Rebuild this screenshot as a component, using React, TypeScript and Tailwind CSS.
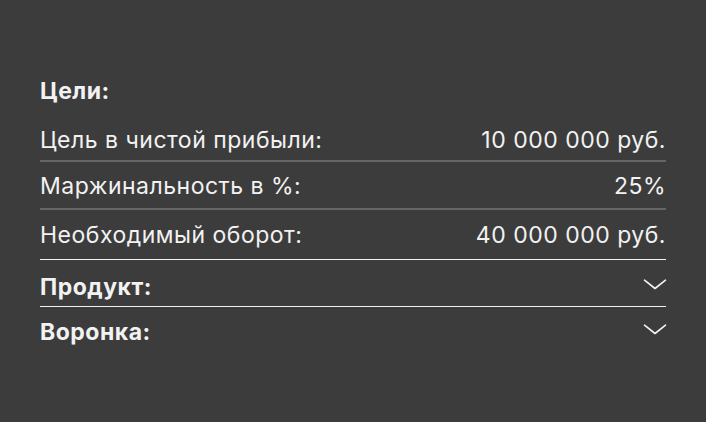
import React from "react";

const Chevron = () => (
  <svg width="24" height="11" viewBox="0 0 24 11" fill="none" className="block mt-[6px] mr-[-1px]">
    <path d="M1.5 1.2 L12 9.5 L22.5 1.2" stroke="#f2f2f2" strokeWidth="1.6" strokeLinecap="round" strokeLinejoin="round" />
  </svg>
);

export default function App() {
  return (
    <div
      className="w-[706px] h-[422px] bg-[#3c3c3c] text-[#f2f2f2] px-[40px] pt-[77px] text-[23px] leading-[28px] tracking-[0.5px]"
      style={{ fontFamily: "Inter, 'Noto Sans', sans-serif" }}
    >
      <div className="font-bold">Цели:</div>
      <div className="flex justify-between pt-[21px] pb-[6px] border-b-2 border-[#666666]">
        <span>Цель в чистой прибыли:</span>
        <span>10 000 000 руб.</span>
      </div>
      <div className="flex justify-between pt-[10px] pb-[8px] border-b-2 border-[#666666]">
        <span>Маржинальность в %:</span>
        <span>25%</span>
      </div>
      <div className="flex justify-between pt-[11px] pb-[10px] border-b border-[#f2f2f2]">
        <span>Необходимый оборот:</span>
        <span>40 000 000 руб.</span>
      </div>
      <div className="flex justify-between items-start pt-[13px] pb-[5px] border-b border-[#f2f2f2]">
        <span className="font-bold">Продукт:</span>
        <Chevron />
      </div>
      <div className="flex justify-between items-start pt-[11px]">
        <span className="font-bold">Воронка:</span>
        <Chevron />
      </div>
    </div>
  );
}
